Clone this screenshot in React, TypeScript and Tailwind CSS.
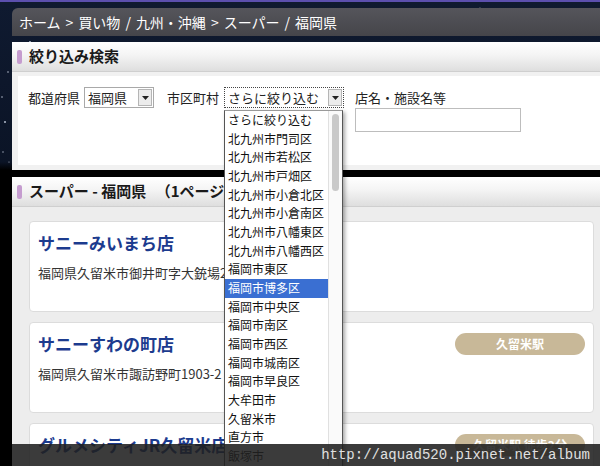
const jp = "font-['Noto_Sans_CJK_JP','Noto_Sans',sans-serif]";

const cities = [
  "さらに絞り込む",
  "北九州市門司区",
  "北九州市若松区",
  "北九州市戸畑区",
  "北九州市小倉北区",
  "北九州市小倉南区",
  "北九州市八幡東区",
  "北九州市八幡西区",
  "福岡市東区",
  "福岡市博多区",
  "福岡市中央区",
  "福岡市南区",
  "福岡市西区",
  "福岡市城南区",
  "福岡市早良区",
  "大牟田市",
  "久留米市",
  "直方市",
  "飯塚市",
  "田川市",
];

const shops = [
  { name: "サニーみいまち店", address: "福岡県久留米市御井町字大銃場2", station: "" },
  { name: "サニーすわの町店", address: "福岡県久留米市諏訪野町1903-2", station: "久留米駅" },
  { name: "グルメシティJR久留米店", address: "福岡県久留米市城南町", station: "久留米駅 徒歩2分" },
];

const crumbs = ["ホーム", ">", "買い物", "/", "九州・沖縄", ">", "スーパー", "/", "福岡県"];

function Stars() {
  const dots = [
    [30, 40, 1], [8, 70, 0.8], [5, 120, 1], [3, 150, 0.7], [60, 8, 0.8],
    [150, 14, 0.6], [260, 30, 0.7], [340, 12, 0.8], [420, 26, 0.6], [505, 18, 0.9],
    [560, 10, 0.7], [590, 30, 0.6], [2, 95, 0.8], [9, 160, 0.6], [480, 6, 0.6],
  ];
  return (
    <svg className="absolute left-0 top-0" width="600" height="170">
      {dots.map(([x, y, r], i) => (
        <circle key={i} cx={x} cy={y} r={r} fill="#dfe6f5" opacity={0.8} />
      ))}
    </svg>
  );
}

function SelectBox({ value, width, focused }: { value: string; width: string; focused?: boolean }) {
  return (
    <div
      className={`flex h-[21px] ${width} items-stretch bg-white ${
        focused ? "border border-dotted border-[#444]" : "border border-[#a9a9a9]"
      }`}
    >
      <span className="flex-1 pl-[3px] text-[13px] leading-[19px] text-[#222]">{value}</span>
      <span className="my-[1px] mr-[1px] flex w-[14px] items-center justify-center border border-[#b5b5b5] bg-[#ececec]">
        <svg width="7" height="4" viewBox="0 0 7 4">
          <path d="M0 0h7L3.5 4z" fill="#222" />
        </svg>
      </span>
    </div>
  );
}

function PanelHeader({ children }: { children: React.ReactNode }) {
  return (
    <div className="flex h-[30px] items-center gap-[7px] border-b border-[#cfcfcf] bg-[linear-gradient(#ffffff,#f4f4f4_45%,#dedede)] pl-[5px]">
      <span className="h-[14px] w-[5px] rounded-[2px] bg-[#c59ccf]" />
      <h2 className="text-[15px] font-bold text-[#1a1a1a]">{children}</h2>
    </div>
  );
}

export default function App() {
  return (
    <div
      className={`relative h-[466px] w-[600px] overflow-hidden border-t-2 border-[#5b4fae] bg-[linear-gradient(#0f1a30_0px,#0b1426_160px,#000_168px)] ${jp}`}
    >
      <Stars />
      <div className="relative flex flex-col pl-[12px] pt-[6px]">
        <div className="flex h-[28px] items-center gap-[5px] rounded-tl-[6px] bg-[linear-gradient(#55555b,#45454a)] pl-[7px] text-[14px] text-white">
          {crumbs.map((c, i) => (
            <span key={i}>{c}</span>
          ))}
        </div>

        <section className="mt-[6px] rounded-tl-[5px] bg-white">
          <PanelHeader>絞り込み検索</PanelHeader>
          <div className="bg-[#f1f1f1] pb-[5px] pl-[6px] pt-[4px]">
            <div className="flex h-[89px] items-start bg-white pl-[10px] pt-[11px] text-[13px] text-[#222]">
              <span className="mr-[4px] leading-[21px]">都道府県</span>
              <SelectBox value="福岡県" width="w-[70px]" />
              <span className="ml-[13px] mr-[5px] leading-[21px]">市区町村</span>
              <SelectBox value="さらに絞り込む" width="w-[120px]" focused />
              <div className="ml-[11px] flex flex-col">
                <span className="leading-[21px]">店名・施設名等</span>
                <div className="h-[24px] w-[166px] border border-[#bdbdbd] bg-white" />
              </div>
            </div>
          </div>
        </section>

        <section className="mt-[7px] bg-white">
          <PanelHeader>
            スーパー - 福岡県 <span className="ml-[6px]">（1ページ目</span>
          </PanelHeader>
          <div className="flex flex-col gap-[10px] bg-[#ededed] pl-[17px] pr-[6px] pt-[14px]">
            {shops.map((s) => (
              <div
                key={s.name}
                className="flex h-[91px] items-start justify-between rounded-[4px] border border-[#dcdcdc] bg-white pl-[8px] pr-[8px] pt-[9px]"
              >
                <div className="flex flex-col">
                  <h3 className="text-[17px] font-bold leading-[24px] text-[#1c3b8e]">{s.name}</h3>
                  <p className="mt-[10px] text-[13px] leading-[16px] text-[#333]">{s.address}</p>
                </div>
                {s.station && (
                  <span className="mt-[1px] flex h-[22px] w-[130px] items-center justify-center rounded-full bg-[#c8b898] text-[12px] font-bold text-white">
                    {s.station}
                  </span>
                )}
              </div>
            ))}
          </div>
        </section>
      </div>

      {/* open city list */}
      <div className="absolute left-[224px] top-[108px] flex h-[380px] w-[119px] border border-[#555] border-t-[#999] bg-white shadow-[2px_2px_4px_rgba(0,0,0,0.35)]">
        <ul className="flex-1">
          {cities.map((c) => (
            <li
              key={c}
              className={`h-[18.67px] pl-[3px] text-[12px] leading-[18.67px] ${
                c === "福岡市博多区" ? "bg-[#3a6fd2] text-white" : "text-[#111]"
              }`}
            >
              {c}
            </li>
          ))}
        </ul>
        <div className="w-[14px] border-l border-[#e0e0e0] bg-[#fafafa] pt-[3px]">
          <div className="mx-auto h-[77px] w-[7px] rounded-full bg-[#c9c9c9]" />
        </div>
      </div>

      {/* watermark */}
      <div className="absolute bottom-0 left-[12px] right-0 h-[22px] bg-[rgba(32,32,32,0.88)] pr-[10px] text-right font-['Liberation_Mono',monospace] text-[14px] leading-[22px] text-[#e0e0e0]">
        http://aquad520.pixnet.net/album
      </div>
    </div>
  );
}
